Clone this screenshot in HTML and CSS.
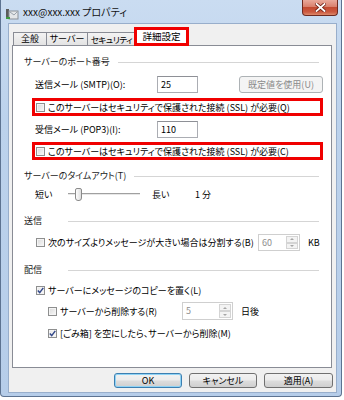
FILE: index.html
```html
<!DOCTYPE html>
<html lang="ja">
<head>
    <meta charset="UTF-8">
    <title>xxx@xxx.xxx プロパティ</title>
    <link rel="stylesheet" href="styles.css">
</head>
<body>
    <div class="window">
        <div class="titlebar">
            <svg class="app-icon" width="14" height="14" viewBox="0 0 14 14">
                <rect x="1" y="3" width="3" height="9" fill="#5b5b5b"/>
                <rect x="4" y="5" width="9" height="8" fill="#e4e6e8" stroke="#8a8f96" stroke-width="1"/>
                <rect x="1" y="11" width="4" height="2" fill="#3d9a3d"/>
                <path d="M5 6 L9 9 L12 6" fill="none" stroke="#9aa2ac" stroke-width="1"/>
            </svg>
            <span class="title">xxx@xxx.xxx プロパティ</span>
            <div class="close-btn">
                <svg width="11" height="9" viewBox="0 0 11 9">
                    <path d="M1.5 1 L9.5 8 M9.5 1 L1.5 8" stroke="#6b1e14" stroke-width="3.4" stroke-linecap="square"/>
                    <path d="M1.5 1 L9.5 8 M9.5 1 L1.5 8" stroke="#ffffff" stroke-width="1.8" stroke-linecap="square"/>
                </svg>
            </div>
        </div>

        <div class="client">
            <div class="tabs">
                <div class="tab tab-general">全般</div>
                <div class="tab tab-server">サーバー</div>
                <div class="tab tab-security">セキュリティ</div>
                <div class="tab active">詳細設定</div>
            </div>

            <div class="panel">
                <div class="group-title"><span>サーバーのポート番号</span><i class="rule"></i></div>
                <div class="row port-row">
                    <span class="field-label">送信メール (SMTP)(O):</span>
                    <div class="textbox">25</div>
                    <div class="btn disabled">既定値を使用(U)</div>
                </div>
                <div class="highlight">
                    <span class="check"></span>
                    <span>このサーバーはセキュリティで保護された接続 (SSL) が必要(Q)</span>
                </div>
                <div class="row port-row">
                    <span class="field-label">受信メール (POP3)(I):</span>
                    <div class="textbox">110</div>
                </div>
                <div class="highlight second">
                    <span class="check"></span>
                    <span>このサーバーはセキュリティで保護された接続 (SSL) が必要(C)</span>
                </div>

                <div class="group-title timeout-title"><span>サーバーのタイムアウト(T)</span><i class="rule"></i></div>
                <div class="row slider-row">
                    <span class="slider-short">短い</span>
                    <div class="slider"><span class="thumb"></span></div>
                    <span class="slider-long">長い</span>
                    <span>1 分</span>
                </div>

                <div class="group-title send-title"><span>送信</span><i class="rule"></i></div>
                <div class="row split-row">
                    <span class="check"></span>
                    <span>次のサイズよりメッセージが大きい場合は分割する(B)</span>
                    <div class="spin split-spin">
                        <span class="spin-value">60</span>
                        <span class="spin-arrows"><b class="up"></b><b class="down"></b></span>
                    </div>
                    <span class="unit">KB</span>
                </div>

                <div class="group-title deliver-title"><span>配信</span><i class="rule"></i></div>
                <div class="row copy-row">
                    <span class="check checked">
                        <svg width="7" height="7" viewBox="0 0 7 7"><path d="M0.8 3.6 L2.7 5.6 L6.3 0.9" fill="none" stroke="#33498a" stroke-width="1.5"/></svg>
                    </span>
                    <span>サーバーにメッセージのコピーを置く(L)</span>
                </div>
                <div class="row delete-row">
                    <span class="delete-label">
                        <span class="check"></span>
                        <span>サーバーから削除する(R)</span>
                    </span>
                    <div class="spin delete-spin">
                        <span class="spin-value">5</span>
                        <span class="spin-arrows"><b class="up"></b><b class="down"></b></span>
                    </div>
                    <span class="unit">日後</span>
                </div>
                <div class="row trash-row">
                    <span class="check checked">
                        <svg width="7" height="7" viewBox="0 0 7 7"><path d="M0.8 3.6 L2.7 5.6 L6.3 0.9" fill="none" stroke="#33498a" stroke-width="1.5"/></svg>
                    </span>
                    <span>[ごみ箱] を空にしたら、サーバーから削除(M)</span>
                </div>
            </div>

            <div class="buttons">
                <div class="btn dialog-btn default">OK</div>
                <div class="btn dialog-btn">キャンセル</div>
                <div class="btn dialog-btn">適用(A)</div>
            </div>
        </div>
    </div>
</body>
</html>
```

FILE: styles.css
```css
* {
    box-sizing: border-box;
}
body {
    margin: 0;
    background: #ffffff;
    font-family: "Noto Sans CJK JP", "Noto Sans", sans-serif;
    font-size: 9px;
    font-feature-settings: "palt";
    color: #000;
    white-space: nowrap;
}
.window {
    width: 342px;
    height: 397px;
    padding: 0 4px 3px 7px;
    background: linear-gradient(to bottom, #cadcf1 0%, #bcd2ec 30%, #b6cde9 100%);
    border: 1px solid #5d7391;
    border-top: none;
    border-radius: 0 0 4px 4px;
    display: flex;
    flex-direction: column;
}
.titlebar {
    height: 23px;
    display: flex;
    align-items: flex-start;
}
.app-icon {
    margin: 6px 4px 0 -3px;
}
.title {
    margin-top: 5px;
    font-size: 10px;
    line-height: 14px;
    color: #111;
}
.close-btn {
    margin-left: auto;
    margin-right: -1px;
    width: 36px;
    height: 16px;
    border: 1px solid #6e2a20;
    border-top: none;
    border-radius: 0 0 4px 4px;
    background: linear-gradient(to bottom, #e9a99b 0%, #d9806d 45%, #c24a31 50%, #cc5a40 80%, #dc8a6c 100%);
    display: flex;
    align-items: center;
    justify-content: center;
}

/* client area */
.client {
    flex: 1;
    background: #f0f0f0;
    border: 1px solid #98aecb;
    display: flex;
    flex-direction: column;
    padding: 3px 3px 4px 3px;
}
.tabs {
    height: 18px;
    display: flex;
    align-items: flex-end;
    padding-left: 1px;
    position: relative;
    z-index: 1;
}
.tab {
    height: 13px;
    border: 1px solid #898c95;
    border-bottom: none;
    margin-right: -1px;
    background: linear-gradient(to bottom, #f3f3f3, #e3e3e3);
    font-size: 9px;
    line-height: 12px;
    text-align: center;
    overflow: hidden;
}
.tab-general { width: 34px; }
.tab-server { width: 42px; }
.tab-security {
    width: 49px;
    font-size: 8.5px;
    letter-spacing: -0.4px;
}
.tab.active {
    width: 55px;
    height: 19px;
    margin-left: -1px;
    margin-bottom: -1px;
    border: 3px solid #f00000;
    background: #ffffff;
    line-height: 13px;
    font-size: 9.5px;
}

.panel {
    width: 320px;
    height: 323px;
    background: #ffffff;
    border: 1px solid #898c95;
    padding: 10px 8px 0 11px;
}
.group-title {
    height: 12px;
    display: flex;
    align-items: center;
    line-height: 12px;
    color: #1b1b1b;
}
.rule {
    flex: 1;
    height: 1px;
    background: #d5d5d5;
    margin: 0 4px 0 8px;
}
.row {
    display: flex;
    align-items: center;
    padding-left: 11px;
}
.port-row {
    height: 17px;
    margin-top: 8px;
}
.port-row + .highlight + .port-row {
    margin-top: 5px;
}
.field-label {
    width: 122px;
}
.textbox {
    width: 41px;
    height: 17px;
    border: 1px solid #abadb3;
    border-top-color: #8e9096;
    background: #fff;
    padding-left: 3px;
    line-height: 15px;
}
.btn {
    display: flex;
    align-items: center;
    justify-content: center;
    border: 1px solid #707070;
    border-radius: 3px;
    background: linear-gradient(to bottom, #f2f2f2 0%, #ebebeb 48%, #dddddd 52%, #cfcfcf 100%);
}
.btn.disabled {
    margin-left: auto;
    width: 84px;
    height: 17px;
    border-color: #adb2b5;
    background: #f4f4f4;
    color: #8a8a8a;
}
.highlight {
    height: 18px;
    margin: 5px 0 0 8px;
    border: 3px solid #f00000;
    display: flex;
    align-items: center;
    padding-left: 1px;
    gap: 3px;
}
.highlight.second {
    margin-top: 4px;
}
.check {
    width: 9px;
    height: 9px;
    flex: none;
    border: 1px solid #8e8f8f;
    background: linear-gradient(135deg, #d9d9d9, #f9f9f9);
    box-shadow: inset 0 0 0 1px #f4f4f4;
    display: flex;
    align-items: center;
    justify-content: center;
}
.check.checked {
    background: linear-gradient(135deg, #e6e6e6, #fbfbfb);
}

/* timeout */
.timeout-title {
    margin-top: 10px;
}
.slider-row {
    height: 16px;
    margin-top: 4px;
}
.slider-short {
    width: 33px;
}
.slider {
    width: 72px;
    height: 16px;
    display: flex;
    align-items: center;
    background: linear-gradient(to bottom, transparent 7px, #a0a0a0 7px, #a0a0a0 8px, #e7e7e7 8px, #e7e7e7 9px, transparent 9px);
}
.thumb {
    margin-left: 7px;
    width: 7px;
    height: 13px;
    border: 1px solid #8a8a8a;
    border-radius: 2px 2px 3px 3px;
    background: linear-gradient(to right, #fdfdfd, #dedede);
}
.slider-long {
    margin-left: 12px;
    width: 43px;
}

/* send */
.send-title {
    margin-top: 13px;
}
.send-title .rule {
    margin-left: 26px;
}
.split-row {
    height: 17px;
    margin-top: 7px;
    gap: 3px;
    padding-left: 12px;
}
.spin {
    height: 17px;
    border: 1px solid #cfcfcf;
    background: #fff;
    display: flex;
    align-items: stretch;
    color: #8d8d8d;
}
.spin-value {
    flex: 1;
    padding-left: 3px;
    line-height: 15px;
}
.spin-arrows {
    width: 13px;
    display: flex;
    flex-direction: column;
    padding: 1px 1px 1px 0;
}
.spin-arrows b {
    flex: 1;
    border: 1px solid #d4d4d4;
    background: #f3f3f3;
    display: flex;
    align-items: center;
    justify-content: center;
}
.spin-arrows b::after {
    content: "";
    border-left: 2px solid transparent;
    border-right: 2px solid transparent;
}
.spin-arrows .up::after {
    border-bottom: 2px solid #a5a5a5;
}
.spin-arrows .down::after {
    border-top: 2px solid #a5a5a5;
}
.split-spin {
    margin-left: auto;
    width: 42px;
}
.unit {
    margin-left: 5px;
    width: 15px;
}

/* deliver */
.deliver-title {
    margin-top: 13px;
}
.deliver-title .rule {
    margin-left: 26px;
}
.copy-row {
    height: 14px;
    margin-top: 7px;
    gap: 3px;
    padding-left: 12px;
}
.delete-row {
    height: 18px;
    margin-top: 5px;
    padding-left: 24px;
}
.delete-label {
    width: 134px;
    display: flex;
    align-items: center;
    gap: 3px;
}
.delete-spin {
    width: 51px;
    height: 18px;
}
.delete-row .unit {
    margin-left: 8px;
    width: auto;
}
.trash-row {
    height: 14px;
    margin-top: 6px;
    gap: 3px;
    padding-left: 24px;
}

/* dialog buttons */
.buttons {
    margin-top: 5px;
    height: 15px;
    display: flex;
    justify-content: flex-end;
    gap: 7px;
}
.dialog-btn {
    width: 68px;
    height: 15px;
}
.dialog-btn:last-child {
    width: 69px;
}
.dialog-btn.default {
    border-color: #3c7fb1;
    box-shadow: inset 0 0 0 1px #8fd3f5;
}
```
